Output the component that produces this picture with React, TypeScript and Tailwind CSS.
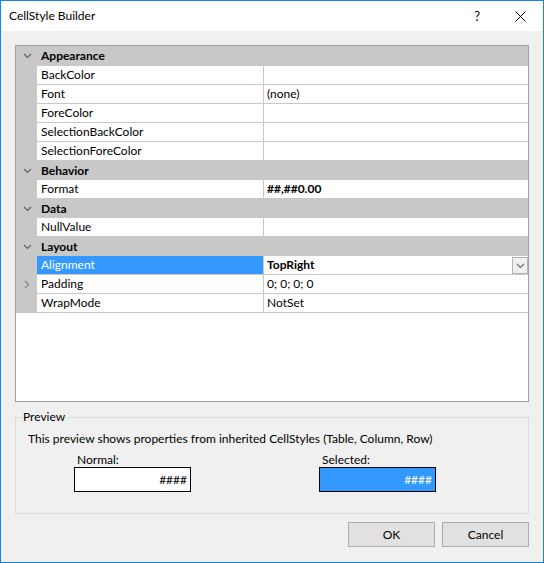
import React from "react";

const FONT = { fontFamily: '"Segoe UI", Lato, "Noto Sans", sans-serif' };

type Prop = { name: string; value?: string; bold?: boolean; selected?: boolean; collapsed?: boolean };
type Category = { title: string; props: Prop[] };

const categories: Category[] = [
    {
        title: "Appearance",
        props: [
            { name: "BackColor" },
            { name: "Font", value: "(none)" },
            { name: "ForeColor" },
            { name: "SelectionBackColor" },
            { name: "SelectionForeColor" },
        ],
    },
    { title: "Behavior", props: [{ name: "Format", value: "##,##0.00", bold: true }] },
    { title: "Data", props: [{ name: "NullValue" }] },
    {
        title: "Layout",
        props: [
            { name: "Alignment", value: "TopRight", bold: true, selected: true },
            { name: "Padding", value: "0; 0; 0; 0", collapsed: true },
            { name: "WrapMode", value: "NotSet" },
        ],
    },
];

function ChevronDown({ color = "#606060" }: { color?: string }) {
    return (
        <svg width="9" height="6" viewBox="0 0 9 6">
            <path d="M1 1 L4.5 4.5 L8 1" fill="none" stroke={color} strokeWidth="1.2" />
        </svg>
    );
}

function ChevronRight() {
    return (
        <svg width="6" height="9" viewBox="0 0 6 9">
            <path d="M1 1 L4.5 4.5 L1 8" fill="none" stroke="#8a8a8a" strokeWidth="1.2" />
        </svg>
    );
}

function CategoryRow({ title, first }: { title: string; first: boolean }) {
    return (
        <div className={`flex items-center bg-[#c8c8c8] ${first ? "h-[20px]" : "h-[19px]"}`}>
            <div className="w-[21px] flex justify-center pl-[1px]">
                <ChevronDown />
            </div>
            <span className="pl-[4px] font-bold text-[12px] leading-[16px] text-black">{title}</span>
        </div>
    );
}

function PropRow({ p }: { p: Prop }) {
    return (
        <div className="flex h-[19px] bg-[#c8c8c8]">
            <div className="w-[21px] flex items-center justify-center pl-[1px]">
                {p.collapsed && <ChevronRight />}
            </div>
            <div
                className={`w-[227px] h-[18px] flex items-center pl-[4px] border-r border-[#c8c8c8] text-[12px] leading-[16px] ${
                    p.selected ? "bg-[#3399ff] text-white" : "bg-white text-black"
                }`}
            >
                {p.name}
            </div>
            <div className="flex-1 h-[18px] bg-white flex items-center pl-[3px] text-[12px] leading-[16px] text-black">
                <span className={`flex-1 ${p.bold ? "font-bold" : ""}`}>{p.value}</span>
                {p.selected && (
                    <div className="w-[16px] h-[17px] mt-[1px] border border-[#b4b4b4] bg-[#f0f0f0] flex items-center justify-center">
                        <ChevronDown color="#707070" />
                    </div>
                )}
            </div>
        </div>
    );
}

export default function App() {
    return (
        <div
            className="w-[544px] h-[563px] border border-[#1883d7] bg-[#f0f0f0] flex flex-col text-black"
            style={FONT}
        >
            <div className="h-[30px] bg-white flex items-center pl-[8px] shrink-0">
                <span className="text-[12px] leading-[16px] flex-1">CellStyle Builder</span>
                <span className="text-[13px] leading-[16px] mr-[35px]">?</span>
                <svg width="11" height="11" viewBox="0 0 11 11" className="mr-[17px]">
                    <path d="M0.5 0.5 L10.5 10.5 M10.5 0.5 L0.5 10.5" stroke="#000" strokeWidth="1" />
                </svg>
            </div>

            <div className="flex-1 flex flex-col px-[14px] pt-[14px]">
                <div className="h-[357px] border border-[#a0a0a0] bg-white flex flex-col">
                    {categories.map((c, i) => (
                        <React.Fragment key={c.title}>
                            <CategoryRow title={c.title} first={i === 0} />
                            {c.props.map((p) => (
                                <PropRow key={p.name} p={p} />
                            ))}
                        </React.Fragment>
                    ))}
                </div>

                <fieldset className="mt-[7px] h-[105px] border border-[#dcdcdc] pl-[12px]">
                    <legend className="-ml-[6px] px-[1px] text-[12px] leading-[16px]">Preview</legend>
                    <div className="pt-[6px] text-[12px] leading-[16px]">
                        This preview shows properties from inherited CellStyles (Table, Column, Row)
                    </div>
                    <div className="flex pl-[46px] gap-[128px] mt-[5px]">
                        <div className="flex flex-col w-[117px]">
                            <span className="pl-[3px] text-[12px] leading-[15px]">Normal:</span>
                            <div className="h-[25px] border border-black bg-white flex items-center justify-end pr-[3px] text-[12px]">
                                ####
                            </div>
                        </div>
                        <div className="flex flex-col w-[117px]">
                            <span className="pl-[3px] text-[12px] leading-[15px]">Selected:</span>
                            <div className="h-[25px] border border-black bg-[#3399ff] text-white flex items-center justify-end pr-[3px] text-[12px]">
                                ####
                            </div>
                        </div>
                    </div>
                </fieldset>

                <div className="flex justify-end gap-[7px] mt-[8px]">
                    <button className="w-[87px] h-[25px] bg-[#e1e1e1] border border-[#adadad] text-[12px]">OK</button>
                    <button className="w-[87px] h-[25px] bg-[#e1e1e1] border border-[#adadad] text-[12px]">Cancel</button>
                </div>
            </div>
        </div>
    );
}
